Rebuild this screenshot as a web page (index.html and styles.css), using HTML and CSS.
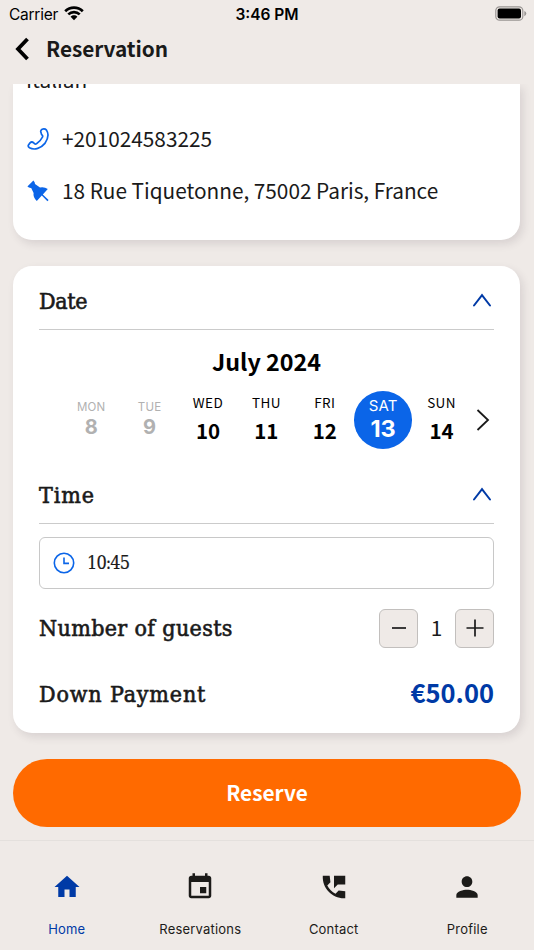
FILE: index.html
```html
<!DOCTYPE html>
<html lang="en">
<head>
<meta charset="utf-8">
<title>Reservation</title>
<link rel="stylesheet" href="styles.css">
</head>
<body>
<div class="app">
  <div class="status">
    <div class="carrier"><span>Carrier</span>
      <svg width="20" height="15" viewBox="0 0 20 15"><g fill="none" stroke="#000" stroke-width="2.7"><path d="M1.200 5.200C6.200.3 13.800.3 18.800 5.200"/><path d="M4.300 8.400c3.200-3.100 8.200-3.100 11.400 0"/></g><path d="M6.600 10.700c1.900-1.800 4.900-1.800 6.800 0L10 14.200z"/></svg>
    </div>
    <div class="clock">3:46 PM</div>
    <svg class="battery" width="32" height="16" viewBox="0 0 32 16"><rect x=".8" y=".8" width="27" height="13.400" rx="3.800" fill="none" stroke="#999593" stroke-width="1.200"/><rect x="2.600" y="2.600" width="23.400" height="9.800" rx="2"/><path d="M29.300 5q2 .8 2 2.600t-2 2.600z" fill="#999593"/></svg>
  </div>
  <header class="header">
    <svg width="15" height="24" viewBox="0 0 15 24"><path d="M13.500 2 4 12l9.500 10" fill="none" stroke="#000" stroke-width="3.800"/></svg>
    <h1>Reservation</h1>
  </header>
  <main class="content">
    <section class="card info">
      <p class="cuisine">Italian</p>
      <div class="info-row">
        <svg width="22" height="22" viewBox="0 0 22 22"><path d="M14.100 4.800C13.200 3.400 14 1.500 15.600 1.100 17 .7 18.500 1 19.500 2.100 22 6 20.900 11.100 17.900 15.400 14.200 20 7.600 22.700 2.500 19.800 1.200 18.900.8 18.100 1.500 16.900L3 14.900C4 13.900 5.700 13.900 6.700 14.900L7.700 15.900Q8.600 16.500 9.500 15.700 13.500 13.300 15.500 9 16 8 15.100 7.100 14.200 6.300 14.100 4.800Z" fill="none" stroke="#0b65e8" stroke-width="1.700"/></svg>
        <span class="phone">+201024583225</span>
      </div>
      <div class="info-row">
        <svg width="22" height="22" viewBox="0 0 22 22"><path d="M6.400.4Q8.300 2.500 8 4l5 3.400Q17.300 6.500 20.800 8.900l-5 5.500 5.800 5.600-1.200 1.200-5.600-5.600-5 5.400Q5.800 17 6.600 12.900L4.200 8Q2 8.200.4 6.600z" fill="#0b65e8"/></svg>
        <span class="address">18 Rue Tiquetonne, 75002 Paris, France</span>
      </div>
    </section>
    <section class="card booking">
      <div class="section-head"><h2 class="t-date">Date</h2><svg width="20" height="14" viewBox="0 0 20 14"><path d="M2 12.500 10 2.200l8 10.300" fill="none" stroke="#003aa6" stroke-width="2" stroke-linecap="round"/></svg></div>
      <h3 class="month">July 2024</h3>
      <div class="week">
        <div class="days">
          <div class="day past"><span>MON</span><b>8</b></div>
          <div class="day past"><span>TUE</span><b>9</b></div>
          <div class="day"><span>WED</span><b>10</b></div>
          <div class="day"><span>THU</span><b>11</b></div>
          <div class="day"><span>FRI</span><b>12</b></div>
          <div class="day selected"><span>SAT</span><b>13</b></div>
          <div class="day"><span>SUN</span><b>14</b></div>
        </div>
        <svg width="14" height="22" viewBox="0 0 14 22"><path d="M1.500 1 12 11 1.500 21" fill="none" stroke="#1a1a1a" stroke-width="1.800"/></svg>
      </div>
      <div class="section-head time-head"><h2 class="t-time">Time</h2><svg width="20" height="14" viewBox="0 0 20 14"><path d="M2 12.500 10 2.200l8 10.300" fill="none" stroke="#003aa6" stroke-width="2" stroke-linecap="round"/></svg></div>
      <div class="time-field">
        <svg width="22" height="22" viewBox="0 0 22 22"><g fill="none" stroke="#0b65e8" stroke-width="1.600"><circle cx="11" cy="11" r="9.700"/><path d="M11 5.600V11.400H16"/></g></svg>
        <span>10:45</span>
      </div>
      <div class="row guests">
        <h2 class="t-guests">Number of guests</h2>
        <div class="stepper">
          <button aria-label="Fewer"><svg width="20" height="20" viewBox="0 0 20 20"><path d="M3 10h14" stroke="#1a1a1a" stroke-width="1.700"/></svg></button>
          <span>1</span>
          <button aria-label="More"><svg width="20" height="20" viewBox="0 0 20 20"><path d="M1.500 10h17M10 1.500v17" stroke="#1a1a1a" stroke-width="1.700"/></svg></button>
        </div>
      </div>
      <div class="row payment"><h2 class="t-pay">Down Payment</h2><strong>€50.00</strong></div>
    </section>
    <button class="reserve">Reserve</button>
  </main>
  <nav class="tabs">
    <a class="tab active"><svg width="30" height="30" viewBox="0 0 24 24"><path d="M10 20v-6h4v6h5v-8h3L12 3 2 12h3v8z"/></svg><span>Home</span></a>
    <a class="tab"><svg width="30" height="30" viewBox="0 0 24 24"><path d="M17 12h-5v5h5v-5zM16 1v2H8V1H6v2H5c-1.110 0-1.990.9-1.990 2L3 19c0 1.100.890 2 2 2h14c1.100 0 2-.9 2-2V5c0-1.100-.9-2-2-2h-1V1h-2zm3 18H5V8h14v11z"/></svg><span>Reservations</span></a>
    <a class="tab"><svg width="30" height="30" viewBox="0 0 24 24"><path d="M21 15.460l-5.270-.610-2.520 2.520c-2.830-1.440-5.150-3.750-6.590-6.590l2.530-2.530L8.540 3H3.030C2.450 13.180 10.820 21.550 21 20.970v-5.510zM12 3v10l3-3h6V3h-9z"/></svg><span>Contact</span></a>
    <a class="tab"><svg width="32" height="32" viewBox="0 0 24 24"><path d="M12 12c2.210 0 4-1.790 4-4s-1.790-4-4-4-4 1.790-4 4 1.790 4 4 4zm0 2c-2.670 0-8 1.340-8 4v2h16v-2c0-2.660-5.330-4-8-4z"/></svg><span>Profile</span></a>
  </nav>
</div>
</body>
</html>
```
FILE: styles.css
```css
* { box-sizing: border-box; }
body { margin: 0; background: #efeae7; color: #1a1a1a; font-family: "Source Sans Pro", "Noto Sans CJK JP", sans-serif; }
h1, h2, h3, p { margin: 0; }
svg { display: block; flex: none; }
button { font: inherit; color: inherit; padding: 0; }
.app { width: 534px; height: 950px; overflow: hidden; display: flex; flex-direction: column; }

.status { height: 28px; display: grid; grid-template-columns: 1fr auto 1fr; align-items: center; padding: 0 7px 0 9px; font-family: Inter, sans-serif; color: #000; }
.carrier { display: flex; align-items: center; gap: 6px; font-size: 15.500px; letter-spacing: -.25px; }
.carrier svg { margin-top: -2px; }
.clock { font-size: 15.500px; font-weight: 600; margin-right: 2px; }
.battery { justify-self: end; margin-top: -1px; }

.header { height: 56px; display: flex; align-items: flex-start; padding: 9px 0 0 14px; gap: 17px; }
.header h1 { font-size: 20.800px; line-height: 24px; font-weight: 700; margin-top: -1px; letter-spacing: -.05px; }

.content { height: 756px; overflow: hidden; padding: 0 13px; display: flex; flex-direction: column; }
.card { width: 507px; flex: none; background: #fff; border-radius: 19px; box-shadow: 3px 4px 8px rgba(60, 50, 60, .13); }
.info { height: 156px; padding: 0 14px; border-radius: 0 0 19px 19px; }
.cuisine { margin: -20px 0 0 -1px; height: 49px; line-height: 30px; font-size: 20.800px; }
.info-row { height: 52px; display: flex; align-items: center; gap: 13px; font-size: 20.800px; line-height: 50px; }
.info-row span { margin-top: -2px; }
.address { letter-spacing: -.02px; }

.booking { height: 467px; margin-top: 26px; padding: 0 26px; }
h2 { font-family: "Roboto Slab", "DejaVu Serif Condensed", "DejaVu Serif", serif; font-weight: 500; font-size: 23px; line-height: 30px; -webkit-text-stroke: .6px #1a1a1a; }
.t-date { letter-spacing: -.3px; }
.t-time { letter-spacing: .9px; }
.t-guests { letter-spacing: .36px; }
.t-pay { letter-spacing: .85px; }
.section-head { height: 64px; border-bottom: 1px solid #cbcbcb; display: flex; justify-content: space-between; align-items: center; padding: 7px 2px 0 0; }
.section-head svg { margin-top: -2px; }
.month { margin-top: 15px; height: 32px; line-height: 32px; text-align: center; font-size: 23.300px; color: #000; }
.week { height: 58px; margin-top: 14px; display: flex; align-items: center; padding: 0 4px 0 23px; justify-content: space-between; }
.days { display: flex; width: 409px; }
.day { width: 58.400px; height: 58px; flex: none; display: flex; flex-direction: column; align-items: center; color: #000; }
.day span { font-size: 13.500px; line-height: 20px; margin-top: 1px; letter-spacing: .4px; }
.day b { font-size: 20.500px; line-height: 26px; margin-top: 5px; }
.past { color: #b1b1b1; font-family: Inter, sans-serif; }
.past span { font-size: 11.500px; line-height: 14px; margin-top: 9px; letter-spacing: .2px; }
.past b { font-size: 20px; font-weight: 700; line-height: 24px; margin-top: 1px; }
.selected { background: #0b65e8; color: #fff; border-radius: 50%; font-family: Inter, sans-serif; }
.selected span { font-size: 15px; margin-top: 5px; letter-spacing: .2px; }
.selected b { font-size: 23.500px; font-weight: 700; margin-top: 0; }
.time-head { height: 75px; padding-top: 17px; }
.time-field { height: 52px; margin-top: 13px; border: 1px solid #c8c8c8; border-radius: 6px; display: flex; align-items: center; gap: 12px; padding-left: 13px; font: 18px/50px "Roboto Slab", "DejaVu Serif Condensed", serif; letter-spacing: -.9px; -webkit-text-stroke: .2px #1a1a1a; }
.row { display: flex; align-items: center; justify-content: space-between; }
.guests { height: 38px; margin-top: 20px; }
.stepper { display: flex; align-items: center; }
.stepper span { width: 37px; text-align: center; font-size: 20.800px; line-height: 30px; margin-top: -2px; }
.stepper button { width: 39px; height: 39px; border: 1px solid #c2bfbd; border-radius: 6px; background: #efeae7; display: grid; place-items: center; }
.payment { height: 40px; margin-top: 27px; }
.payment strong { font-size: 25.500px; line-height: 40px; margin-top: -4px; color: #003aa6; }
.reserve { flex: none; width: 508px; height: 68px; margin-top: 27px; margin-top: 26px; border: 0; border-radius: 34px; background: #ff6a00; color: #fff; font-size: 20.800px; font-weight: 700; padding-bottom: 3px; }

.tabs { height: 110px; border-top: 1px solid #e4e0dd; display: flex; padding-top: 30px; }
.tab { flex: 1; display: flex; flex-direction: column; align-items: center; font: 13px/20px Inter, sans-serif; letter-spacing: .2px; color: #1c1b19; fill: #1c1b19; }
.tab svg { height: 32px; margin-bottom: 16px; }
.active { color: #003aa6; fill: #003aa6; }
```
